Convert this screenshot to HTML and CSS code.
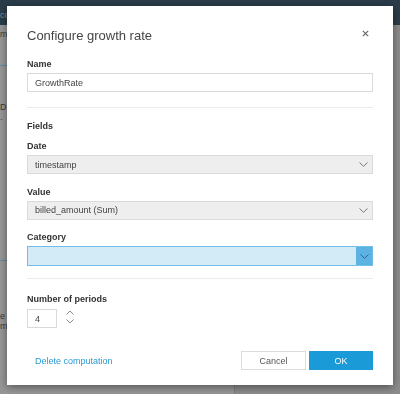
FILE: index.html
```html
<!DOCTYPE html>
<html lang="en">
  <head>
    <meta charset="UTF-8" />
    <meta name="viewport" content="width=device-width, initial-scale=1.0" />
    <title>Configure growth rate</title>

    <link rel="stylesheet" href="styles.css">
  </head>

  <body>
    <header class="topbar"><span class="topbar-txt">co</span></header>
    <main class="page">
      <aside class="side">
        <p class="side-item first">m</p>
        <p class="side-item">D</p>
        <p class="side-item small">·</p>
        <p class="side-item low">e</p>
        <p class="side-item">m</p>
      </aside>
      <section class="content"></section>
    </main>

    <div class="modal">
      <div class="modal-head">
        <h1 class="modal-title">Configure growth rate</h1>
        <button class="close" aria-label="Close">
          <svg width="7" height="7" viewBox="0 0 7 7"><path d="M0.8 0.8L6.2 6.2M6.2 0.8L0.8 6.2" stroke="#666" stroke-width="1.2" fill="none"/></svg>
        </button>
      </div>

      <div class="group first-group">
        <label class="lbl">Name</label>
        <div class="field">GrowthRate</div>
      </div>

      <hr class="sep" />

      <div class="section-lbl">Fields</div>

      <div class="group tight">
        <label class="lbl">Date</label>
        <div class="field select">
          <span>timestamp</span>
          <svg width="9" height="5" viewBox="0 0 9 5"><path d="M0.5 0.5L4.5 4.3L8.5 0.5" stroke="#777" stroke-width="1" fill="none"/></svg>
        </div>
      </div>

      <div class="group">
        <label class="lbl">Value</label>
        <div class="field select">
          <span>billed_amount (Sum)</span>
          <svg width="9" height="5" viewBox="0 0 9 5"><path d="M0.5 0.5L4.5 4.3L8.5 0.5" stroke="#777" stroke-width="1" fill="none"/></svg>
        </div>
      </div>

      <div class="group">
        <label class="lbl">Category</label>
        <div class="field select active">
          <span></span>
          <span class="arrow-box">
            <svg width="9" height="5" viewBox="0 0 9 5"><path d="M0.5 0.5L4.5 4.3L8.5 0.5" stroke="#2b6a92" stroke-width="1" fill="none"/></svg>
          </span>
        </div>
      </div>

      <hr class="sep sep2" />

      <div class="group periods">
        <label class="lbl">Number of periods</label>
        <div class="num-row">
          <div class="field num">4</div>
          <div class="spin">
            <svg width="8" height="5" viewBox="0 0 8 5"><path d="M0.5 4.5L4 1L7.5 4.5" stroke="#8a8a8a" stroke-width="1" fill="none"/></svg>
            <svg width="8" height="5" viewBox="0 0 8 5"><path d="M0.5 0.5L4 4L7.5 0.5" stroke="#8a8a8a" stroke-width="1" fill="none"/></svg>
          </div>
        </div>
      </div>

      <div class="modal-foot">
        <a class="delete" href="#">Delete computation</a>
        <div class="btns">
          <button class="btn cancel">Cancel</button>
          <button class="btn ok">OK</button>
        </div>
      </div>
    </div>
  </body>
</html>
```

FILE: styles.css
```css
* {
  box-sizing: border-box;
}
body {
  margin: 0;
  font-family: "Liberation Sans", Arial, Helvetica, sans-serif;
  background-color: #8c8c8c;
  height: 394px;
  overflow: hidden;
}

/* dimmed page behind the dialog */
.topbar {
  height: 25px;
  background-color: #2a3d49;
  padding: 4px 0 0 0;
}
.topbar-txt {
  font-size: 9px;
  color: #7f8f99;
}
.page {
  display: flex;
  height: 369px;
}
.side {
  width: 235px;
  background-color: #979797;
  border-right: 1px solid #7e7e7e;
  padding-top: 1px;
}
.side-item {
  margin: 0;
  font-size: 9px;
  color: #3a3a3a;
  padding-left: 0;
}
.side-item.first {
  height: 40px;
  padding-top: 3px;
  border-bottom: 1px solid #5a8bab;
}
.side-item:nth-child(2) {
  margin-top: 36px;
}
.side-item.small {
  margin-top: 2px;
  height: 147px;
  border-bottom: 1px solid #5a8bab;
}
.side-item.low {
  margin-top: 50px;
}
.content {
  flex: 1;
}

/* dialog */
.modal {
  position: fixed;
  left: 7px;
  top: 6px;
  width: 386px;
  height: 379px;
  background-color: #fff;
  padding: 0 20px;
  box-shadow: 0 2px 8px rgba(0, 0, 0, 0.45);
  display: flex;
  flex-direction: column;
}
.modal-head {
  display: flex;
  justify-content: space-between;
  align-items: center;
  padding-top: 22px;
}
.modal-title {
  margin: 0;
  font-size: 13px;
  line-height: 16px;
  font-weight: normal;
  color: #454545;
}
.close {
  border: 0;
  background: none;
  padding: 0;
  width: 7px;
  height: 7px;
  margin-right: 4px;
  margin-top: -5px;
  display: flex;
}

.group {
  display: flex;
  flex-direction: column;
  gap: 3px;
  margin-top: 12.5px;
}
.first-group {
  margin-top: 15px;
}
.group.tight {
  margin-top: 9px;
}
.lbl,
.section-lbl {
  font-size: 9px;
  line-height: 11px;
  font-weight: bold;
  color: #333;
}
.section-lbl {
  margin-top: 13px;
}

.field {
  height: 19px;
  border: 1px solid #dadada;
  background-color: #fff;
  font-size: 9px;
  color: #444;
  padding: 0 7px;
  display: flex;
  align-items: center;
}
.select {
  background-color: #eeeeee;
  justify-content: space-between;
  padding-right: 4px;
}
.select.active {
  height: 20px;
  background-color: #d3eaf7;
  border-color: #74bde6;
  padding-right: 0;
}
.arrow-box {
  width: 16px;
  height: 100%;
  background-color: #5bb2e3;
  display: flex;
  align-items: center;
  justify-content: center;
}

.sep {
  border: 0;
  border-top: 1px solid #ececec;
  margin: 15px 0 0 0;
}
.sep2 {
  margin-top: 12px;
}
.periods {
  margin-top: 15px;
  gap: 4px;
}
.num-row {
  display: flex;
  align-items: center;
  gap: 9px;
}
.num {
  width: 30px;
}
.spin {
  display: flex;
  flex-direction: column;
  gap: 4px;
  margin-top: -4px;
}

.modal-foot {
  margin-top: 23px;
  display: flex;
  justify-content: space-between;
  align-items: center;
}
.delete {
  font-size: 9px;
  color: #2a9ad6;
  text-decoration: none;
  padding-left: 8px;
}
.btns {
  display: flex;
  gap: 3px;
}
.btn {
  height: 19px;
  font-family: inherit;
  font-size: 9px;
  border: 1px solid #dcdcdc;
  background-color: #fff;
  color: #555;
  width: 65px;
  padding: 0;
}
.btn.ok {
  width: 64px;
  background-color: #1a9bd7;
  border-color: #1a9bd7;
  color: #fff;
}
```
